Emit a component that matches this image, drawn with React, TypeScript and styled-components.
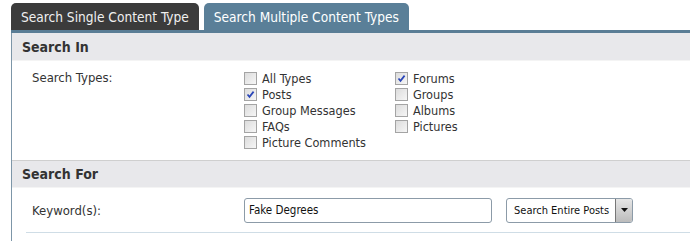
import React from "react";
import styled, {createGlobalStyle} from "styled-components";

const GlobalStyle = createGlobalStyle`
  body {
    margin: 0;
    background: #ffffff;
    font-family: Tahoma, "DejaVu Sans Condensed", "DejaVu Sans", sans-serif;
    color: #333333;
  }
`

type CheckItem = {
    label: string;
    checked?: boolean;
}

const leftTypes: CheckItem[] = [
    {label: 'All Types'},
    {label: 'Posts', checked: true},
    {label: 'Group Messages'},
    {label: 'FAQs'},
    {label: 'Picture Comments'},
];

const rightTypes: CheckItem[] = [
    {label: 'Forums', checked: true},
    {label: 'Groups'},
    {label: 'Albums'},
    {label: 'Pictures'},
];

const CheckList = ({items}: { items: CheckItem[] }) => (
    <Column>
        {items.map(item => (
            <CheckRow key={item.label}>
                <Box>
                    {item.checked && (
                        <svg width="9" height="9" viewBox="0 0 9 9">
                            <path d="M1.5 4.5 L3.5 6.8 L7.6 1.6" stroke="#2a46b8" strokeWidth="1.7" fill="none"/>
                        </svg>
                    )}
                </Box>
                {item.label}
            </CheckRow>
        ))}
    </Column>
)

const App = () => {
    return (
        <Page>
            <GlobalStyle/>
            <TabBar>
                <Tab>Search Single Content Type</Tab>
                <Tab $active>Search Multiple Content Types</Tab>
            </TabBar>
            <Panel>
                <SectionHeader>Search In</SectionHeader>
                <TypesRow>
                    <Label>Search Types:</Label>
                    <Columns>
                        <CheckList items={leftTypes}/>
                        <CheckList items={rightTypes}/>
                    </Columns>
                </TypesRow>
                <SectionHeader $divided>Search For</SectionHeader>
                <KeywordRow>
                    <KeywordLabel>Keyword(s):</KeywordLabel>
                    <TextInput defaultValue="Fake Degrees"/>
                    <Select>
                        <SelectText>Search Entire Posts</SelectText>
                        <SelectArrow>
                            <svg width="7" height="4" viewBox="0 0 7 4">
                                <path d="M0 0 H7 L3.5 4 Z" fill="#111"/>
                            </svg>
                        </SelectArrow>
                    </Select>
                </KeywordRow>
            </Panel>
        </Page>
    )
}

const Page = styled.div`
  padding: 3px 0 0 11px;
  width: 690px;
  height: 241px;
  box-sizing: border-box;
  overflow: hidden;
`

const TabBar = styled.div`
  display: flex;
  gap: 5px;
  border-bottom: 3px solid #5a7d95;
`

const Tab = styled.div<{ $active?: boolean }>`
  height: 27px;
  padding: 0 10px 0 10px;
  display: flex;
  align-items: center;
  border-radius: 5px 5px 0 0;
  font-size: 13.6px;
  white-space: nowrap;
  background: ${p => p.$active ? '#5a7f98' : '#3b3b3b'};
  color: ${p => p.$active ? '#ffffff' : '#f0f0f0'};
`

const Panel = styled.div`
  border-left: 1px solid #7d96a8;
  height: 220px;
`

const SectionHeader = styled.div<{ $divided?: boolean }>`
  height: 26px;
  display: flex;
  align-items: center;
  padding-left: 10px;
  font-size: 14px;
  font-weight: bold;
  color: #333;
  background: #e8e8eb;
  border-top: 1px solid ${p => p.$divided ? '#cfcfcf' : '#e8e8eb'};
  border-bottom: 1px solid #f4f4f4;
`

const TypesRow = styled.div`
  display: flex;
  height: 99px;
  padding-top: 9px;
  box-sizing: border-box;
`

const Label = styled.div`
  width: 232px;
  box-sizing: border-box;
  padding-left: 20px;
  font-size: 13px;
  color: #333;
  flex-shrink: 0;
`

const KeywordLabel = styled(Label)`
  width: 218px;
  padding-left: 6px;
`

const Columns = styled.div`
  display: flex;
  gap: 29px;
`

const Column = styled.div`
  display: flex;
  flex-direction: column;
`

const CheckRow = styled.div`
  display: flex;
  align-items: center;
  gap: 5px;
  height: 16px;
  font-size: 12.6px;
  color: #333;
  white-space: nowrap;
`

const Box = styled.span`
  width: 11px;
  height: 11px;
  border: 1px solid #a4a4a4;
  background: linear-gradient(135deg, #dcdcdc, #f6f6f6);
  display: flex;
  align-items: center;
  justify-content: center;
`

const KeywordRow = styled.div`
  display: flex;
  align-items: center;
  height: 44px;
  margin-left: 14px;
  border-bottom: 1px solid #cfdde6;
`

const TextInput = styled.input`
  width: 248px;
  height: 25px;
  box-sizing: border-box;
  border: 1px solid #8c9ba8;
  border-radius: 3px;
  padding: 0 4px;
  font-family: inherit;
  font-size: 11.5px;
  color: #111;
  outline: none;
`

const Select = styled.div`
  margin-left: 14px;
  width: 127px;
  height: 25px;
  box-sizing: border-box;
  border: 1px solid #8c9ba8;
  border-radius: 3px;
  display: flex;
  overflow: hidden;
`

const SelectText = styled.div`
  flex: 1;
  display: flex;
  align-items: center;
  padding-left: 7px;
  font-size: 11px;
  white-space: nowrap;
  color: #111;
`

const SelectArrow = styled.div`
  width: 16px;
  border-left: 1px solid #777;
  background: linear-gradient(#e6e6e6, #bcbcbc);
  display: flex;
  align-items: center;
  justify-content: center;
`

export default App;
